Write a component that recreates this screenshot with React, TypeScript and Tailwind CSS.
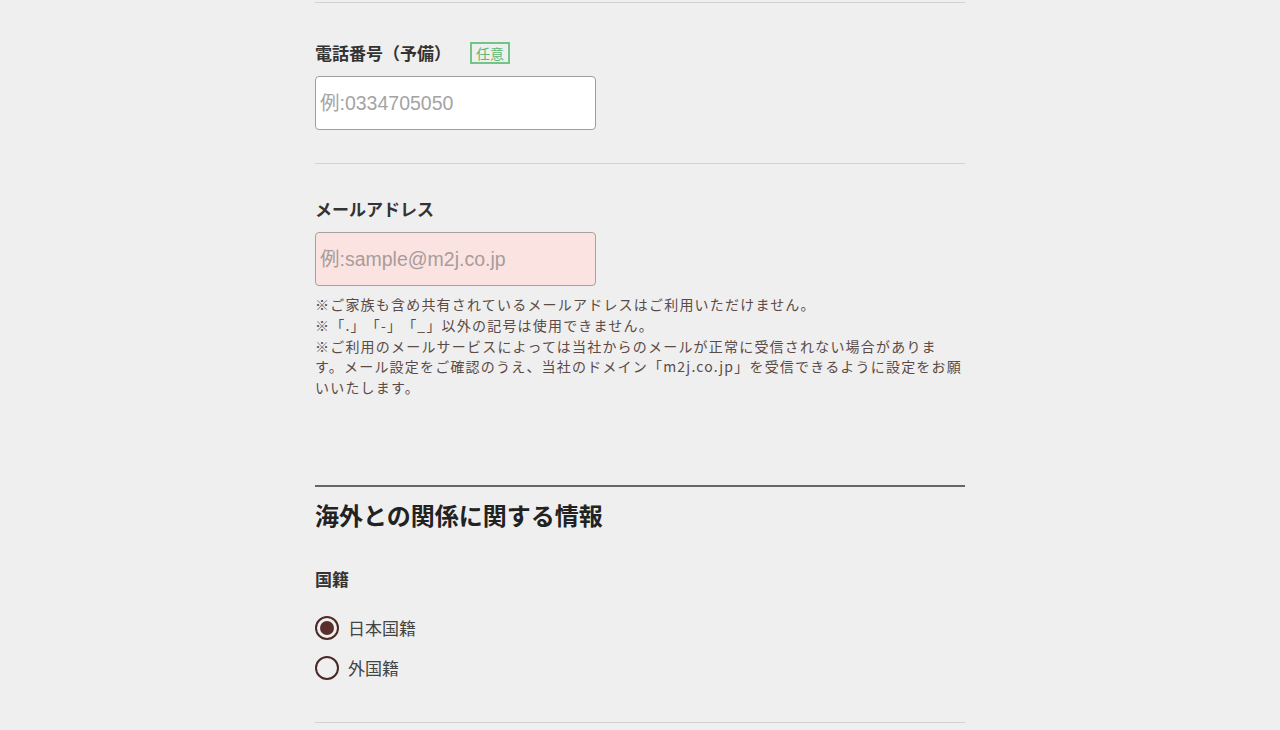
import React from 'react';

const labelCls = 'text-[17px] font-bold leading-6 text-[#333]';

function Radio({ label, checked }: { label: string; checked?: boolean }) {
  return (
    <label className="flex items-center gap-[9px] h-6">
      <span className="w-6 h-6 rounded-full border-2 border-[#4b2a26] flex items-center justify-center">
        {checked && <span className="w-[14px] h-[14px] rounded-full bg-[#5a2e2a]" />}
      </span>
      <span className="text-[17px] leading-6 text-[#444]">{label}</span>
    </label>
  );
}

export default function App() {
  return (
    <div
      className="min-h-screen bg-[#efefef] [text-spacing-trim:space-all]"
      style={{ fontFamily: '"Noto Sans CJK JP", "Noto Sans", sans-serif' }}
    >
      <div className="w-[650px] mx-auto pt-[2px]">
        {/* 電話番号（予備） */}
        <section className="border-t border-[#d2d2d2] pt-[38px] pb-[33px]">
          <div className="flex items-center h-6">
            <span className={labelCls}>電話番号（予備）</span>
            <span className="ml-[19px] h-[22px] px-[4px] border-2 border-[#72c487] text-[#5fb873] text-[14px] leading-[18px]">
              任意
            </span>
          </div>
          <input
            className="mt-[11px] block w-[281px] h-[54px] bg-white border border-[#9e9e9e] rounded-[4px] px-[4px] text-[19.5px] placeholder:text-[#a4a4a4] outline-none"
            style={{ fontFamily: '"Liberation Sans", "Noto Sans CJK JP", sans-serif' }}
            placeholder="例:0334705050"
          />
        </section>

        {/* メールアドレス */}
        <section className="border-t border-[#d2d2d2] pt-[33px]">
          <div className={labelCls}>メールアドレス</div>
          <input
            className="mt-[11px] block w-[281px] h-[54px] bg-[#fbe3e1] border border-[#a9a09f] rounded-[4px] px-[4px] text-[19.5px] placeholder:text-[#a89c9b] outline-none"
            style={{ fontFamily: '"Liberation Sans", "Noto Sans CJK JP", sans-serif' }}
            placeholder="例:sample@m2j.co.jp"
          />
          <div className="mt-2 text-[14px] leading-[20.75px] tracking-[1.2px] text-[#5b4a46]">
            <p>※ご家族も含め共有されているメールアドレスはご利用いただけません。</p>
            <p>※「.」「-」「_」以外の記号は使用できません。</p>
            <p>
              ※ご利用のメールサービスによっては当社からのメールが正常に受信されない場合があります。メール設定をご確認のうえ、当社のドメイン「m2j.co.jp」を受信できるように設定をお願いいたします。
            </p>
          </div>
        </section>

        {/* 海外との関係に関する情報 */}
        <section className="mt-[87px] border-t-2 border-[#666]">
          <h2 className="mt-3 text-[24px] leading-8 font-bold text-[#222]">海外との関係に関する情報</h2>
          <div className={`${labelCls} mt-9`}>国籍</div>
          <div className="mt-[25px] flex flex-col gap-4">
            <Radio label="日本国籍" checked />
            <Radio label="外国籍" />
          </div>
          <div className="mt-[42px] border-t border-[#d2d2d2]" />
        </section>
      </div>
    </div>
  );
}
